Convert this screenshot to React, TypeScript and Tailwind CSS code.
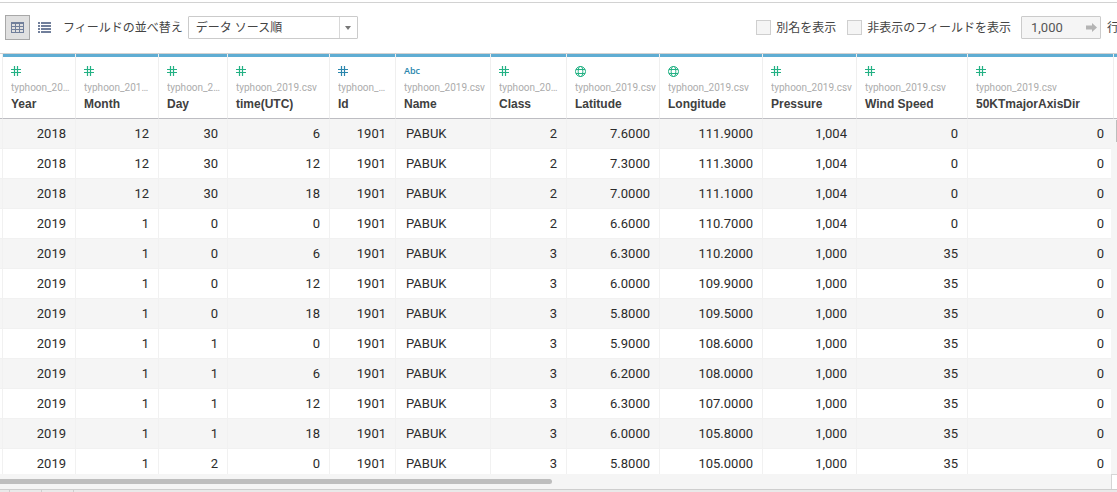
import { useState } from "react";
import clsx from "clsx";

type Kind = "green-number" | "blue-number" | "geo" | "text";

const columns: { name: string; kind: Kind; width: string; tight?: boolean }[] = [
  { name: "Year", kind: "green-number", width: "w-[73px]", tight: true },
  { name: "Month", kind: "green-number", width: "w-[83px]" },
  { name: "Day", kind: "green-number", width: "w-[69px]" },
  { name: "time(UTC)", kind: "green-number", width: "w-[102px]" },
  { name: "Id", kind: "blue-number", width: "w-[66px]" },
  { name: "Name", kind: "text", width: "w-[95px]", tight: true },
  { name: "Class", kind: "green-number", width: "w-[76px]" },
  { name: "Latitude", kind: "geo", width: "w-[93px]", tight: true },
  { name: "Longitude", kind: "geo", width: "w-[103px]" },
  { name: "Pressure", kind: "green-number", width: "w-[94px]", tight: true },
  { name: "Wind Speed", kind: "green-number", width: "w-[111px]" },
  { name: "50KTmajorAxisDir", kind: "green-number", width: "w-[146px]" },
];

const rows = [
  ["2018", "12", "30", "6", "1901", "PABUK", "2", "7.6000", "111.9000", "1,004", "0", "0"],
  ["2018", "12", "30", "12", "1901", "PABUK", "2", "7.3000", "111.3000", "1,004", "0", "0"],
  ["2018", "12", "30", "18", "1901", "PABUK", "2", "7.0000", "111.1000", "1,004", "0", "0"],
  ["2019", "1", "0", "0", "1901", "PABUK", "2", "6.6000", "110.7000", "1,004", "0", "0"],
  ["2019", "1", "0", "6", "1901", "PABUK", "3", "6.3000", "110.2000", "1,000", "35", "0"],
  ["2019", "1", "0", "12", "1901", "PABUK", "3", "6.0000", "109.9000", "1,000", "35", "0"],
  ["2019", "1", "0", "18", "1901", "PABUK", "3", "5.8000", "109.5000", "1,000", "35", "0"],
  ["2019", "1", "1", "0", "1901", "PABUK", "3", "5.9000", "108.6000", "1,000", "35", "0"],
  ["2019", "1", "1", "6", "1901", "PABUK", "3", "6.2000", "108.0000", "1,000", "35", "0"],
  ["2019", "1", "1", "12", "1901", "PABUK", "3", "6.3000", "107.0000", "1,000", "35", "0"],
  ["2019", "1", "1", "18", "1901", "PABUK", "3", "6.0000", "105.8000", "1,000", "35", "0"],
  ["2019", "1", "2", "0", "1901", "PABUK", "3", "5.8000", "105.0000", "1,000", "35", "0"],
];

function KindIcon({ kind }: { kind: Kind }) {
  if (kind === "text") {
    return (
      <span className="block font-['Open_Sans',sans-serif] text-[9px] leading-3 font-semibold text-[#2a86ad]">
        Abc
      </span>
    );
  }
  if (kind === "geo") {
    return (
      <svg width="12" height="12" viewBox="0 0 12 12" fill="none" stroke="#23b184">
        <circle cx="5.5" cy="6.5" r="5" />
        <ellipse cx="5.5" cy="6.5" rx="2.3" ry="5" />
        <path d="M1 4.5h9M1 8.5h9" />
      </svg>
    );
  }
  return (
    <svg
      width="12"
      height="12"
      viewBox="0 0 12 12"
      fill="none"
      stroke={kind === "blue-number" ? "#2a86ad" : "#23b184"}
      strokeWidth="1.2"
    >
      <path d="M3.5 1v10M6.5 1v10M0 4.5h10M0 7.5h10" />
    </svg>
  );
}

function Toolbar() {
  const [aliases, setAliases] = useState(false);
  const [hidden, setHidden] = useState(false);
  const checkbox =
    "size-[15px] shrink-0 appearance-none border border-[#cfcfcf] bg-[#f5f5f5] checked:bg-[#5fadd3]";

  return (
    <div className="mt-0.5 flex h-[52px] shrink-0 items-center overflow-hidden border-y border-[#d2d2d2] pb-px pl-[5px] text-xs whitespace-nowrap text-[#444]">
      <button
        type="button"
        aria-label="グリッド表示"
        className="grid size-[25px] shrink-0 place-items-center border border-[#a8a8a8] bg-[#e0e0e0]"
      >
        <svg width="13" height="11" viewBox="0 0 13 11" fill="#717f9b">
          <path
            fillRule="evenodd"
            d="M0 0h13v11H0zM1 2v2h3V2zM5 2v2h3V2zM9 2v2h3V2zM1 5v2h3V5zM5 5v2h3V5zM9 5v2h3V5zM1 8v2h3V8zM5 8v2h3V8zM9 8v2h3V8z"
          />
        </svg>
      </button>
      <button type="button" aria-label="リスト表示" className="ml-2 shrink-0">
        <svg width="13" height="11" viewBox="0 0 13 11" fill="#717f9b">
          <path d="M0 0h2v2H0zM3 0h10v2H3zM0 3h2v2H0zM3 3h10v2H3zM0 6h2v2H0zM3 6h10v2H3zM0 9h2v2H0zM3 9h10v2H3z" />
        </svg>
      </button>
      <label htmlFor="sort" className="ml-3">
        フィールドの並べ替え
      </label>
      <div className="relative ml-[5px] shrink-0">
        <select
          id="sort"
          className="block h-[23px] w-[170px] appearance-none rounded-[1px] border border-[#cbcbcb] bg-white pl-[7px] text-[#444]"
        >
          <option>データ ソース順</option>
        </select>
        <span className="pointer-events-none absolute inset-y-px right-px grid w-[18px] place-items-center border-l border-[#d8d8d8]">
          <svg width="6" height="4" viewBox="0 0 6 4" fill="#777">
            <path d="M0 0h6L3 4z" />
          </svg>
        </span>
      </div>

      <div className="-mr-0.5 ml-auto flex shrink-0 items-center">
        <label className="flex items-center gap-[5px]">
          <input
            type="checkbox"
            className={checkbox}
            checked={aliases}
            onChange={(e) => setAliases(e.target.checked)}
          />
          別名を表示
        </label>
        <label className="ml-[11px] flex items-center gap-[5px]">
          <input
            type="checkbox"
            className={checkbox}
            checked={hidden}
            onChange={(e) => setHidden(e.target.checked)}
          />
          非表示のフィールドを表示
        </label>
        <div className="relative ml-2.5">
          <input
            id="row-count"
            defaultValue="1,000"
            className="block h-[23px] w-20 rounded-[1px] border border-[#cbcbcb] bg-[#f5f5f5] pr-5 pl-[9px] text-[13px] text-[#555]"
          />
          <svg
            className="pointer-events-none absolute top-[7px] right-1"
            width="11"
            height="9"
            viewBox="0 0 11 9"
            fill="#b4b4b4"
          >
            <path d="M0 2.5h6V0l5 4.5L6 9V6.5H0z" />
          </svg>
        </div>
        <label htmlFor="row-count" className="ml-1.5">
          行
        </label>
      </div>
    </div>
  );
}

function DataTable() {
  return (
    <table className="w-full table-fixed border-separate border-spacing-0">
      <colgroup>
        <col className="w-0.5" />
        {columns.map((c) => (
          <col key={c.name} className={c.width} />
        ))}
        <col />
      </colgroup>
      <thead>
        <tr>
          <td className="border-b border-[#bdbdc2] p-0" />
          {columns.map((c) => (
            <th
              key={c.name}
              scope="col"
              className="border-b border-l border-b-[#bdbdc2] border-l-[#efefef] p-0 text-left align-top font-normal"
            >
              <div
                className={clsx(
                  "h-16 border-t-3 border-[#5fadd3] pt-2 pl-2",
                  c.tight ? "pr-[3px]" : "pr-1.5",
                )}
              >
                <div className="h-3">
                  <KindIcon kind={c.kind} />
                </div>
                <div className="mt-1 truncate text-[10px] leading-[14px] text-[#acacac]">
                  typhoon_2019.csv
                </div>
                <div className="font-['Liberation_Sans',sans-serif] text-xs leading-[18px] font-bold whitespace-nowrap text-[#404040]">
                  {c.name}
                </div>
              </div>
            </th>
          ))}
          <td className="border-b border-l border-b-[#bdbdc2] border-l-[#efefef] p-0 align-top">
            <div className="h-16 border-t-3 border-[#5fadd3]" />
          </td>
        </tr>
      </thead>
      <tbody>
        {rows.map((row, i) => (
          <tr key={i} className="odd:bg-[#f5f5f5]">
            <td className="border-b border-[#f1f1f1] p-0" />
            {row.map((value, j) => (
              <td
                key={j}
                className={clsx(
                  "h-[30px] border-b border-l border-[#f1f1f1] py-0 pr-[9px] text-[13px] leading-5 text-[#2b2b2b]",
                  columns[j].kind === "text" ? "pl-2.5 text-left" : "pl-2 text-right",
                )}
              >
                {value}
              </td>
            ))}
            <td className="border-b border-[#f1f1f1] p-0" />
          </tr>
        ))}
      </tbody>
    </table>
  );
}

export default function App() {
  return (
    <div className="flex h-screen flex-col overflow-hidden bg-white font-[Roboto,'Noto_Sans_CJK_JP',sans-serif]">
      <Toolbar />

      <div className="relative min-h-0 flex-1 overflow-hidden">
        <DataTable />
        {/* Vertical scrollbar */}
        <div className="absolute top-[65px] right-0 bottom-0 w-1.5 bg-[#f5f5f5]">
          <div className="mt-px ml-auto h-[22px] w-px bg-[#bdbdbd]" />
        </div>
      </div>

      {/* Horizontal scrollbar */}
      <div className="flex h-[15px] shrink-0 bg-[#f5f5f5]">
        <div className="flex-1 pt-[5px]">
          <div className="h-[5px] w-[552px] rounded-r-full bg-[#bebebe]" />
        </div>
        <div className="w-1.5 border-t border-l border-[#d5d5d5] bg-white" />
      </div>

      {/* Sheet tabs */}
      <div className="flex h-[3px] shrink-0 border-t border-[#cecece] bg-[#e9e9e9]">
        <div className="w-2.5 border-r border-[#cecece]" />
        <div className="w-8 border-r border-[#cecece]" />
        <div className="w-8 border-r border-[#cecece]" />
      </div>
    </div>
  );
}
